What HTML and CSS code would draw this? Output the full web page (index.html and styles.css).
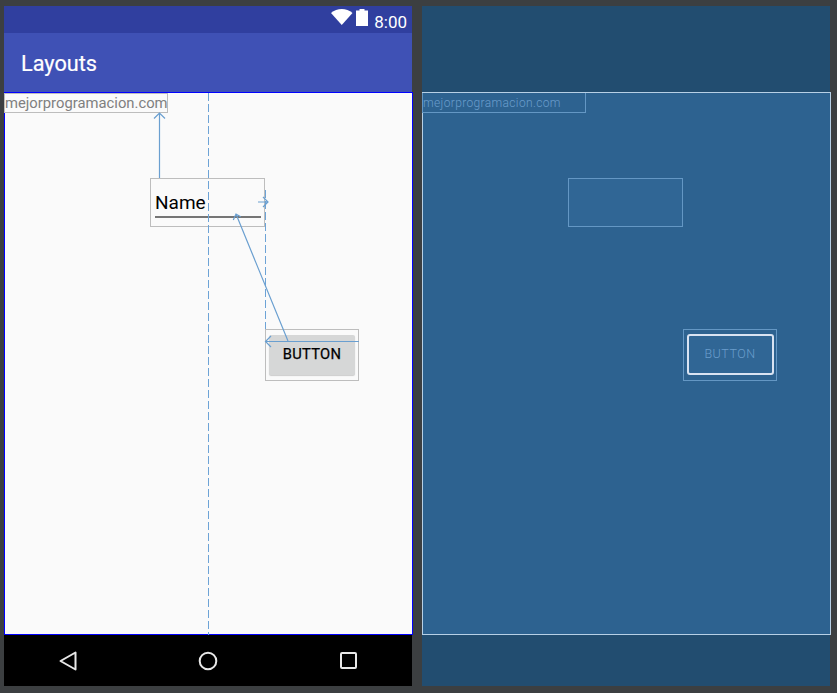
FILE: index.html
```html
<!DOCTYPE html>
<html lang="en">
<head>
<meta charset="utf-8">
<title>Layouts</title>
<link rel="stylesheet" href="styles.css">
</head>
<body>
<main class="editor">
  <section class="device">
    <header class="status">
      <svg class="wifi" width="22" height="16" viewBox="0 0 22 16"><path d="M0 4 C6 -1.200 15.500 -1.200 21.500 4 L10.750 16 Z" fill="#fff"/></svg>
      <svg class="battery" width="12" height="17" viewBox="0 0 12 17"><path d="M3.500 0h5v1.500H12V17H0V1.500h3.500Z" fill="#fff"/></svg>
      <span class="clock">8:00</span>
    </header>
    <div class="appbar">Layouts</div>
    <div class="canvas">
      <div class="widget text-view">mejorprogramacion.com</div>
      <div class="widget edit"><span class="edit-text">Name</span><span class="edit-line"></span></div>
      <div class="widget button-box"><div class="button">BUTTON</div></div>
      <svg class="links" width="409" height="544" viewBox="0 0 409 544" fill="none">
        <path class="guide" d="M204.500 1V543"/>
        <path class="guide" d="M261.500 98V237"/>
        <path class="link" d="M155.500 86V21M150 26.500L155.500 21L161 26.500"/>
        <path class="link" d="M254 110H263.500M259 105L264 110L259 115"/>
        <path class="link" d="M284 249L232 122M229.300 128L232 122L236.700 124.700"/>
        <path class="link" d="M355 249.500H262M267 244L261.500 249.500L267 255"/>
      </svg>
    </div>
    <nav class="navbar">
      <svg class="nav-back" width="18" height="20" viewBox="0 0 18 20" fill="none"><path class="nav-icon" d="M16.500 1.500V18.500L1.500 10Z"/></svg>
      <svg class="nav-home" width="20" height="20" viewBox="0 0 20 20" fill="none"><circle class="nav-icon" cx="10" cy="10" r="8.300"/></svg>
      <svg class="nav-recent" width="18" height="18" viewBox="0 0 18 18" fill="none"><rect class="nav-icon" x="1" y="1" width="15" height="15" rx="1"/></svg>
    </nav>
  </section>
  <section class="blueprint">
    <div class="bp-canvas">
      <div class="bp-widget bp-text">mejorprogramacion.com</div>
      <div class="bp-widget bp-edit"></div>
      <div class="bp-widget bp-box"><div class="bp-button">BUTTON</div></div>
    </div>
  </section>
</main>
</body>
</html>
```
FILE: styles.css
```css
* { box-sizing: border-box; }
html, body { margin: 0; height: 100%; }
body { background: #3c3f41; overflow: hidden; font-family: Roboto, "Liberation Sans", sans-serif; }
.editor { display: flex; gap: 10px; padding: 6px 0 0 4px; }
.device, .blueprint { width: 408px; height: 680px; flex: none; }
.device { display: flex; flex-direction: column; background: #000; }
.status { height: 27px; background: #303f9f; display: flex; align-items: center; justify-content: flex-end; padding: 0 5px 0 0; color: #fff; }
.wifi { margin: -5px 3px 0 0; }
.battery { margin: -5px 6px 0 0; }
.clock { font-size: 17px; line-height: 18px; margin-top: 5px; }
.appbar { height: 59px; background: #3f51b5; color: #fff; font-size: 21.700px; font-weight: 400; line-height: 61px; padding-left: 17px; -webkit-text-stroke: .2px #fff; }
.canvas { position: relative; width: 409px; height: 543px; background: #fafafa; border: 1px solid #0000ff; }
.links { position: absolute; left: -1px; top: -1px; }
.guide { stroke: #6da3d6; stroke-width: 1; stroke-dasharray: 8 3; }
.link { stroke: #6a9fd0; stroke-width: 1.200; }
.widget { position: absolute; border: 1px solid #bdbdbd; }
.text-view { left: -1px; top: 0; width: 164px; height: 20px; color: #808080; font-size: 14.800px; line-height: 19px; white-space: nowrap; }
.edit { left: 145px; top: 85px; width: 115px; height: 49px; }
.edit-text { position: absolute; left: 4px; top: 13px; font-size: 19px; line-height: 22px; color: #000; }
.edit-line { position: absolute; left: 4px; right: 3px; top: 37px; height: 2px; background: #757575; }
.button-box { left: 260px; top: 236px; width: 94px; height: 52px; padding: 5px 3px; }
.button { width: 86px; height: 40px; background: #d6d7d7; border-radius: 2px; color: #000; font-size: 14.700px; font-weight: 400; line-height: 39px; text-align: center; box-shadow: 0 1px 1px #ccc; letter-spacing: .3px; -webkit-text-stroke: .25px #000; }
.navbar { flex: 1; display: flex; align-items: center; padding-left: 55px; }
.nav-icon { stroke: #e8e8e8; stroke-width: 2; stroke-linejoin: round; }
.nav-home { margin-left: 121px; }
.nav-recent { margin-left: 122px; }
.blueprint { background: #224d70; padding-top: 86px; }
.bp-canvas { position: relative; width: 409px; height: 543px; background: #2d6290; border: 1px solid #b7d0e6; }
.bp-widget { position: absolute; border: 1px solid #6497c4; }
.bp-text { left: -1px; top: 0; width: 164px; height: 20px; color: #6a9dcc; font-size: 12px; font-weight: 300; letter-spacing: .36px; line-height: 21px; white-space: nowrap; border-top: 0; }
.bp-edit { left: 145px; top: 85px; width: 115px; height: 49px; background: #306695; }
.bp-box { left: 260px; top: 236px; width: 94px; height: 52px; padding: 4px 2.500px; }
.bp-button { width: 87px; height: 41px; border: 2px solid #d9e3f2; border-radius: 3px; background: #306695; color: #6a9dcc; font-size: 12.500px; font-weight: 300; letter-spacing: .5px; line-height: 36px; text-align: center; }
```
